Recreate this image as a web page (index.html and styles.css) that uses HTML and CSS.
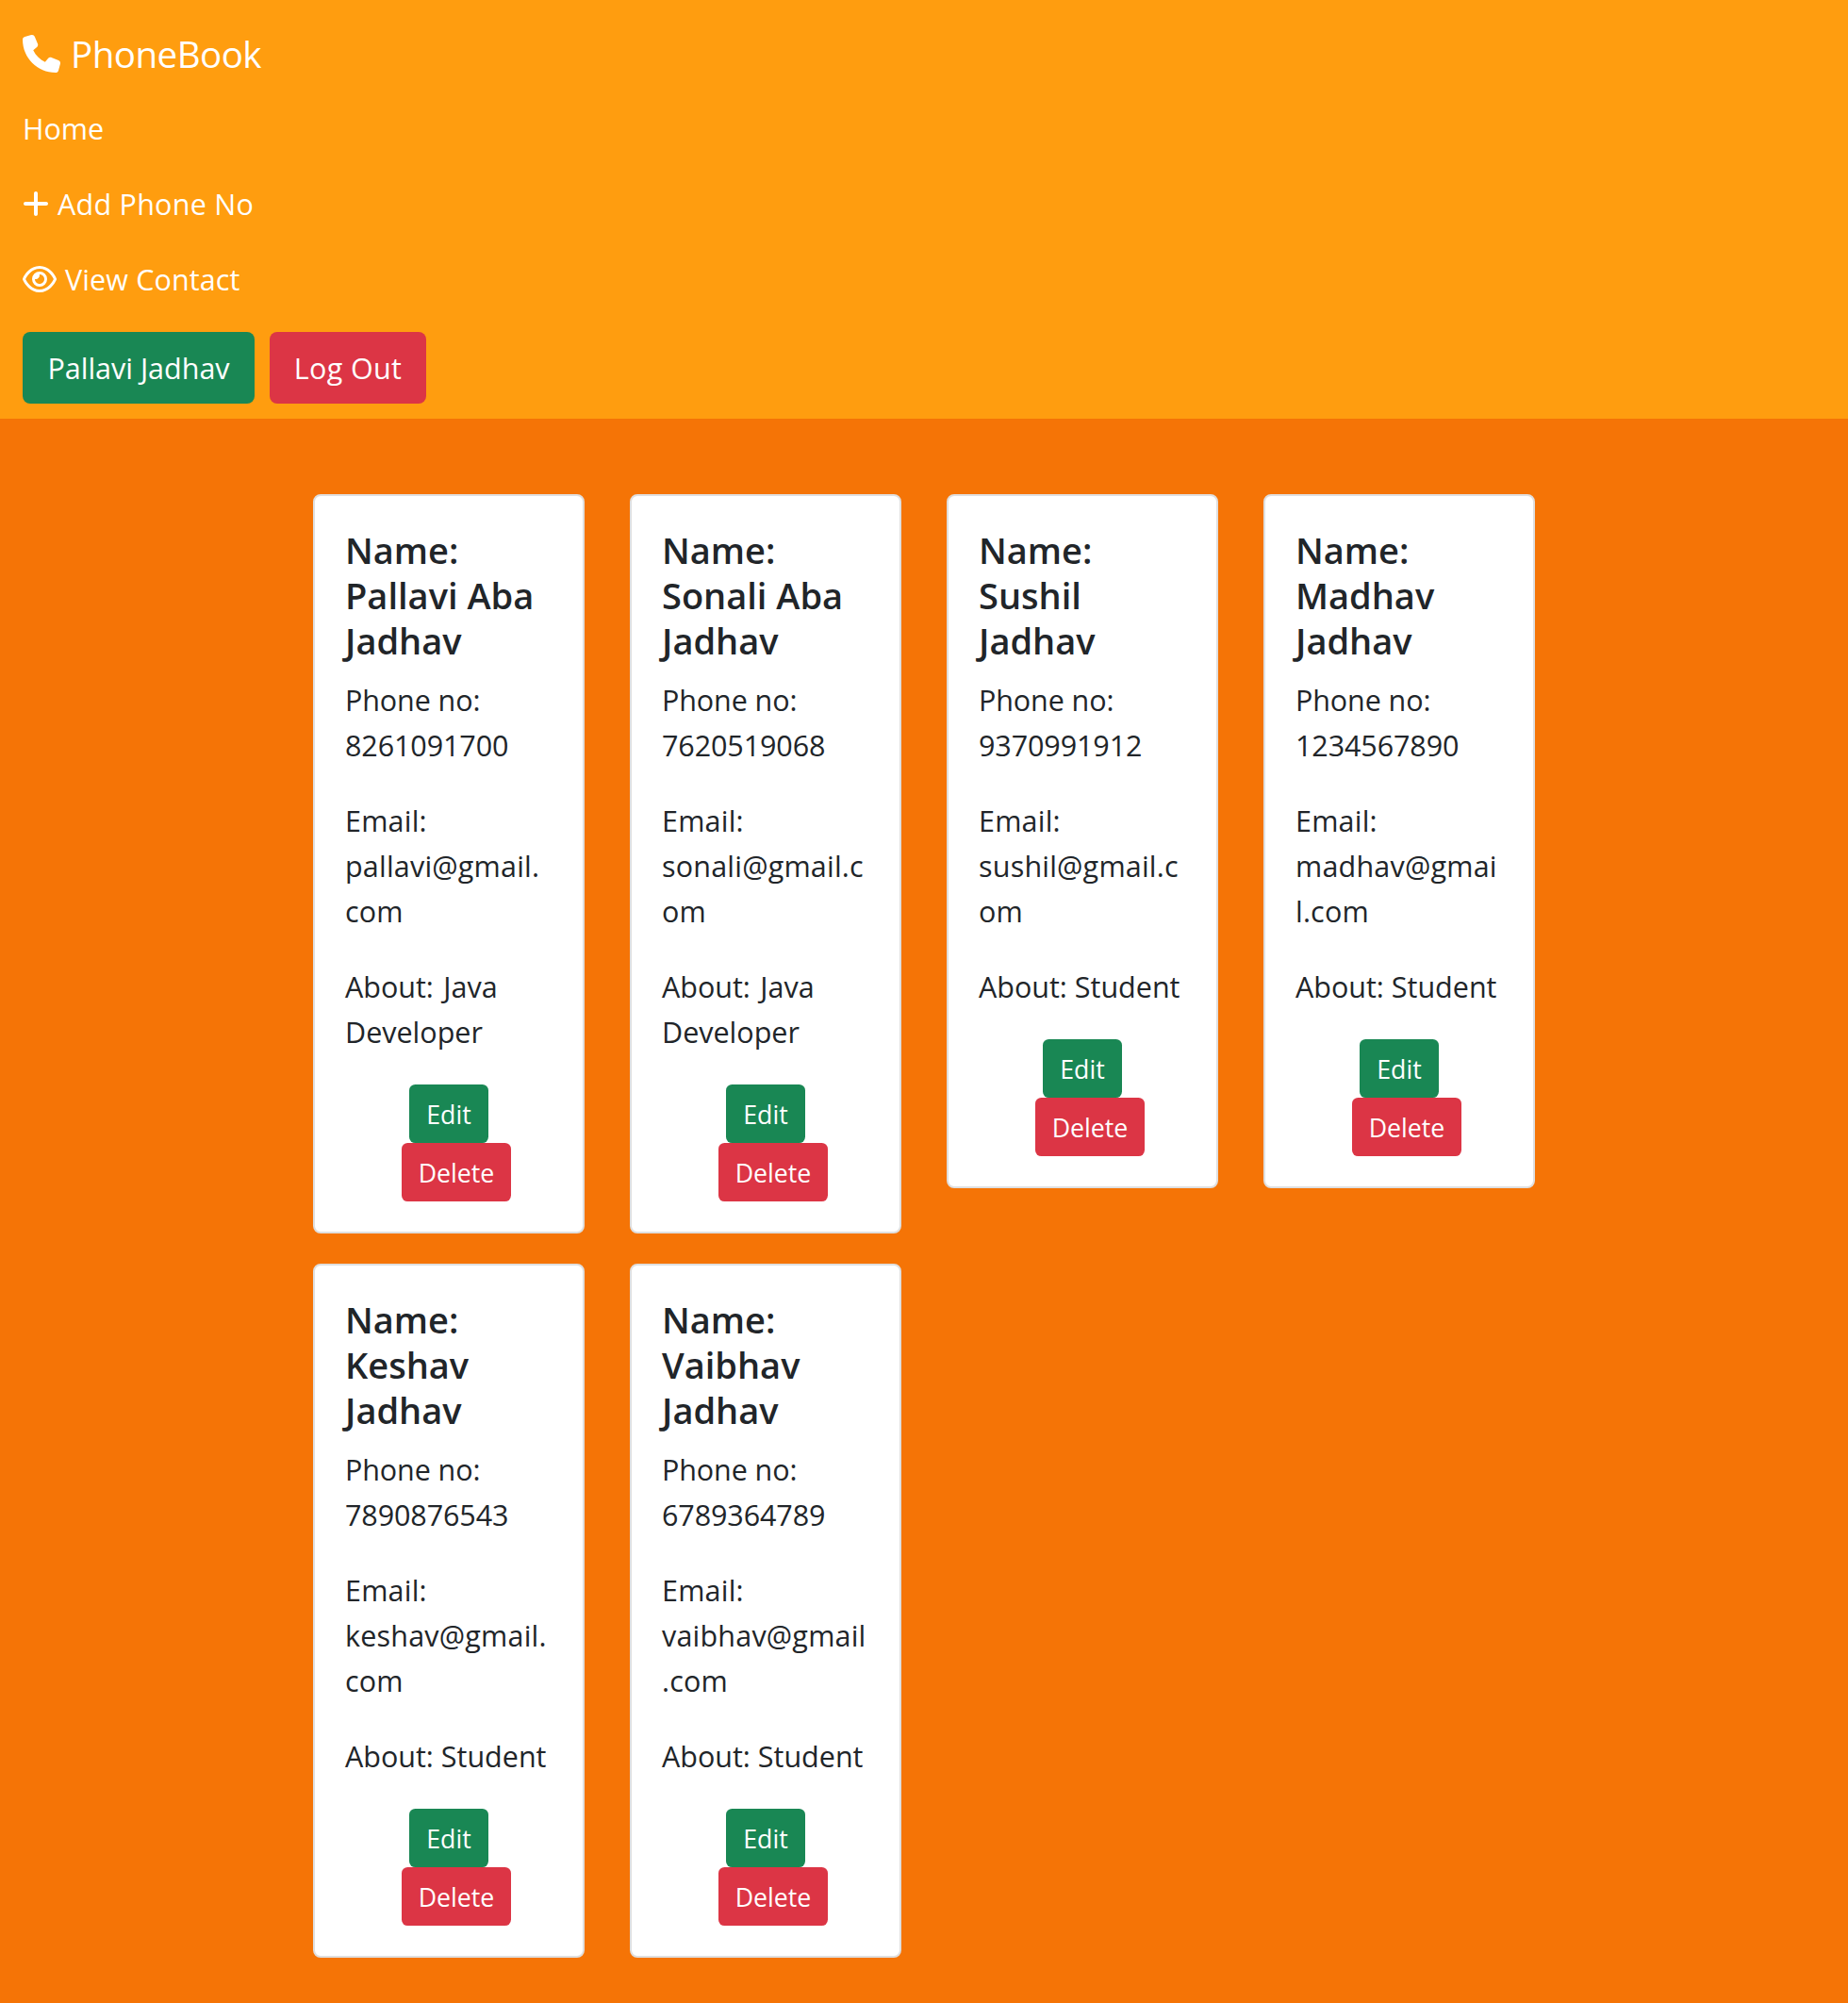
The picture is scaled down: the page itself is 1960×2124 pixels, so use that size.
FILE: index.html
```html
<!DOCTYPE html>
<html lang="en">
<head>
<meta charset="utf-8">
<title>PhoneBook</title>
<link rel="stylesheet" href="styles.css">
</head>
<body>
<nav class="navbar">
  <a class="brand"><svg class="icon-phone" viewBox="0 0 512 512"><path d="M164.9 24.6c-7.7-18.6-28-28.5-47.4-23.2l-88 24C12.1 30.2 0 46 0 64C0 311.4 200.6 512 448 512c18 0 33.8-12.1 38.6-29.5l24-88c5.3-19.4-4.6-39.7-23.2-47.4l-96-40c-16.3-6.8-35.2-2.1-46.3 11.6L304.7 368C234.3 334.7 177.3 277.7 144 207.3L193.3 167c13.7-11.2 18.4-30 11.6-46.3l-40-96z"/></svg><span class="brand-name">PhoneBook</span></a>
  <a class="nav-link"><span class="home">Home</span></a>
  <a class="nav-link"><svg class="icon-plus" viewBox="0 0 448 512"><path d="M256 80c0-17.7-14.3-32-32-32s-32 14.3-32 32V224H48c-17.7 0-32 14.3-32 32s14.3 32 32 32H192V432c0 17.7 14.3 32 32 32s32-14.3 32-32V288H400c17.7 0 32-14.3 32-32s-14.3-32-32-32H256V80z"/></svg><span class="add">Add Phone No</span></a>
  <a class="nav-link"><svg class="icon-eye" viewBox="0 0 576 512"><path d="M288 80c-65.2 0-118.8 29.6-159.9 67.7C89.6 183.5 63 226 49.4 256c13.6 30 40.2 72.5 78.6 108.3C169.2 402.4 222.8 432 288 432s118.8-29.6 159.9-67.7C486.4 328.5 513 286 526.6 256c-13.6-30-40.2-72.5-78.6-108.3C406.8 109.6 353.2 80 288 80zM95.4 112.6C142.5 68.8 207.2 32 288 32s145.5 36.8 192.6 80.6c46.8 43.5 78.1 95.4 93 131.1c3.3 7.9 3.3 16.7 0 24.6c-14.9 35.7-46.2 87.7-93 131.1C433.5 443.2 368.8 480 288 480s-145.5-36.8-192.6-80.6C48.6 356 17.3 304 2.5 268.3c-3.3-7.9-3.3-16.7 0-24.6C17.3 208 48.6 156 95.4 112.6zM288 336c44.2 0 80-35.8 80-80s-35.8-80-80-80c-.7 0-1.3 0-2 0c1.3 5.1 2 10.5 2 16c0 35.3-28.7 64-64 64c-5.5 0-10.9-.7-16-2c0 .7 0 1.3 0 2c0 44.2 35.8 80 80 80zm0-208a128 128 0 1 1 0 256 128 128 0 1 1 0-256z" fill-rule="evenodd"/></svg><span class="view">View Contact</span></a>
  <div class="account">
    <a class="btn user">Pallavi Jadhav</a>
    <a class="btn logout">Log Out</a>
  </div>
</nav>
<main class="contacts">
  <article class="card">
    <h5>Name:<br>Pallavi Aba<br>Jadhav</h5>
    <p class="phone">Phone no:<br>8261091700</p>
    <p class="email">Email:<br>pallavi@gmail.<br>com</p>
    <p class="about-long">About: Java<br>Developer</p>
    <div class="actions"><a class="btn edit">Edit</a><a class="btn delete">Delete</a></div>
  </article>
  <article class="card">
    <h5>Name:<br>Sonali Aba<br>Jadhav</h5>
    <p class="phone">Phone no:<br>7620519068</p>
    <p class="email">Email:<br>sonali@gmail.c<br>om</p>
    <p class="about-long">About: Java<br>Developer</p>
    <div class="actions"><a class="btn edit">Edit</a><a class="btn delete">Delete</a></div>
  </article>
  <article class="card">
    <h5>Name:<br>Sushil<br>Jadhav</h5>
    <p class="phone">Phone no:<br>9370991912</p>
    <p class="email">Email:<br>sushil@gmail.c<br>om</p>
    <p>About: Student</p>
    <div class="actions"><a class="btn edit">Edit</a><a class="btn delete">Delete</a></div>
  </article>
  <article class="card">
    <h5>Name:<br>Madhav<br>Jadhav</h5>
    <p class="phone">Phone no:<br>1234567890</p>
    <p class="email">Email:<br>madhav@gmai<br>l.com</p>
    <p>About: Student</p>
    <div class="actions"><a class="btn edit">Edit</a><a class="btn delete">Delete</a></div>
  </article>
  <article class="card">
    <h5>Name:<br>Keshav<br>Jadhav</h5>
    <p class="phone">Phone no:<br>7890876543</p>
    <p class="email">Email:<br>keshav@gmail.<br>com</p>
    <p>About: Student</p>
    <div class="actions"><a class="btn edit">Edit</a><a class="btn delete">Delete</a></div>
  </article>
  <article class="card">
    <h5>Name:<br>Vaibhav<br>Jadhav</h5>
    <p class="phone">Phone no:<br>6789364789</p>
    <p class="email">Email:<br>vaibhav@gmail<br>.com</p>
    <p>About: Student</p>
    <div class="actions"><a class="btn edit">Edit</a><a class="btn delete">Delete</a></div>
  </article>
</main>
</body>
</html>
```
FILE: styles.css
```css
* { box-sizing: border-box; }

body {
  margin: 0;
  min-height: 2124px;
  background: #f57406;
  color: #212529;
  font-family: "Segoe UI", "Open Sans", "Noto Sans", sans-serif;
  font-size: 30.5px;
  line-height: 48px;
  white-space: nowrap;
}

svg { display: block; fill: #fff; flex: none; }

.navbar {
  height: 444px;
  padding: 16px 24px;
  background: #ff9d0f;
  color: #fff;
  display: flex;
  flex-direction: column;
}

.brand {
  height: 80px;
  display: flex;
  align-items: center;
  gap: 11px;
  font-size: 38.5px;
  line-height: 60px;
}

.brand-name { padding-top: 2px; letter-spacing: -0.5px; }
.add { letter-spacing: 0.25px; }
.view { letter-spacing: 0.12px; }

.icon-phone { width: 40px; height: 40px; margin-top: 2px; }
.icon-plus { width: 28px; height: 32px; }
.icon-eye { width: 36px; height: 32px; }

.nav-link {
  height: 80px;
  display: flex;
  align-items: center;
  gap: 9px;
}

.account { display: flex; gap: 16px; padding-top: 16px; }

.btn {
  display: flex;
  justify-content: center;
  align-items: center;
  border-radius: 8px;
  color: #fff;
}

.user { width: 246px; height: 76px; background: #198754; }
.logout { width: 166px; height: 76px; background: #dc3545; letter-spacing: 0.35px; }

.contacts {
  display: grid;
  grid-template-columns: repeat(4, 288px);
  gap: 32px 48px;
  justify-content: center;
  align-items: start;
  padding-top: 80px;
}

.card {
  background: #fff;
  border: 2px solid #dfdfdf;
  border-radius: 8px;
  padding: 32px;
}

h5 {
  margin: 0 0 15px;
  padding-top: 1px;
  font-size: 38px;
  line-height: 48px;
  font-weight: 600;
}

p { margin: 0 0 32px; }
.phone { letter-spacing: -0.1px; }
.email { letter-spacing: 0.2px; }
.about-long { word-spacing: 2.5px; }

.actions {
  display: flex;
  flex-direction: column;
  align-items: center;
  font-size: 26.7px;
}

.actions .btn { height: 62px; padding-top: 2px; border-radius: 6.4px; }
.edit { width: 84px; background: #198754; }
.delete { width: 116px; margin-left: 16px; background: #dc3545; }
```
